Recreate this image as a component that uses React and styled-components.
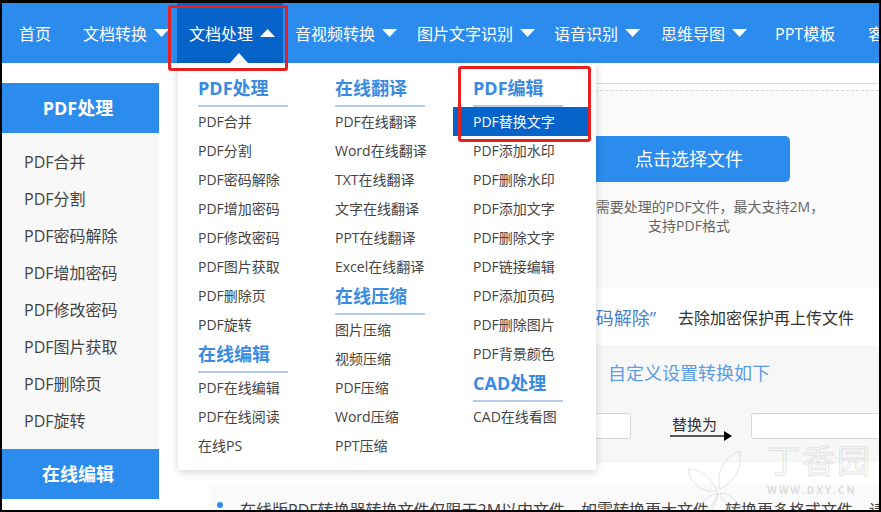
import React from 'react';
import styled, { createGlobalStyle } from 'styled-components';

const GlobalStyle = createGlobalStyle`
  html, body {
    margin: 0;
    padding: 0;
    background: #000;
    font-family: "Open Sans", "Noto Sans CJK SC", sans-serif;
  }
  * { box-sizing: border-box; }
`;

const Frame = styled.div`
  position: relative;
  width: 881px;
  height: 512px;
  overflow: hidden;
  background: #fff;
  border-style: solid;
  border-color: #000;
  border-width: 3px 2px 2px 2px;
`;

const Nav = styled.nav`
  display: flex;
  height: 60px;
  padding-left: 5px;
  background: #2b8ced;
  white-space: nowrap;
`;

const NavItem = styled.div`
  position: relative;
  display: flex;
  flex: none;
  align-items: center;
  height: 60px;
  padding: 0 ${p => p.$right}px 0 12px;
  font-size: 16px;
  color: #fff;
  background: ${p => (p.$active ? '#0563c9' : 'transparent')};
`;

const Caret = styled.i`
  display: block;
  width: 15px;
  height: 8px;
  margin-left: 7px;
  background: #fff;
  clip-path: ${p => (p.$up ? 'polygon(50% 0, 100% 100%, 0 100%)' : 'polygon(0 0, 100% 0, 50% 100%)')};
`;

const Notch = styled.i`
  position: absolute;
  left: 53px;
  bottom: 0;
  width: 0;
  height: 0;
  border-left: 9px solid transparent;
  border-right: 9px solid transparent;
  border-bottom: 10px solid #fff;
`;

const Body = styled.div`
  display: flex;
  height: 447px;
`;

const Sidebar = styled.aside`
  flex: none;
  width: 157px;
  padding-top: 20px;
`;

const SideTitle = styled.div`
  height: 50px;
  line-height: 50px;
  padding-right: 5px;
  text-align: center;
  font-size: 18px;
  font-weight: 700;
  color: #fff;
  background: #2b8ced;
`;

const SideList = styled.ul`
  margin: 0;
  padding: 11px 0 9px 22px;
  list-style: none;
  background: #f8f8f8;
`;

const SideLink = styled.li`
  height: 37px;
  line-height: 37px;
  font-size: 16px;
  color: #444;
`;

const Content = styled.main`
  flex: 1;
  min-width: 0;
  padding: 20px 0 0 50px;
  overflow: hidden;
`;

const UploadBox = styled.section`
  height: 206px;
  padding-top: 6px;
  border-top: 1px solid #dcdcdc;
`;

const DropZone = styled.div`
  display: flex;
  flex-direction: column;
  align-items: center;
  height: 199px;
  padding: 45px 0 0 290px;
  background: #fafafa;
  border-top: 1px dashed #d4d4d4;
`;

const PickButton = styled.div`
  width: 202px;
  height: 46px;
  line-height: 46px;
  text-align: center;
  font-size: 18px;
  color: #fff;
  background: #2b8ced;
  border-radius: 5px;
`;

const Hint = styled.p`
  margin: 15px 0 0;
  line-height: 19px;
  text-align: center;
  text-indent: 14px;
  white-space: nowrap;
  font-size: 14px;
  color: #666;
`;

const Notice = styled.div`
  display: flex;
  justify-content: flex-end;
  align-items: center;
  height: 56px;
  padding-right: 25px;
  font-size: 16px;
  color: #333;
`;

const NoticeLink = styled.span`
  margin-right: 22px;
  font-size: 18px;
  color: #4a7fd0;
`;

const Settings = styled.section`
  height: 118px;
  padding: 14px 0 0 399px;
  background: #f7f7f7;
`;

const SettingsTitle = styled.div`
  height: 30px;
  line-height: 28px;
  font-size: 18px;
  color: #5b9de0;
`;

const ReplaceRow = styled.div`
  display: flex;
  align-items: flex-start;
  margin: 24px 0 0 -129px;
`;

const TextBox = styled.div`
  flex: none;
  width: ${p => p.$w}px;
  height: 26px;
  background: #fff;
  border: 1px solid #d5d5d5;
  border-radius: 3px;
`;

const ReplaceLabel = styled.div`
  flex: none;
  width: 62px;
  margin: 1px 19px 0 39px;
  line-height: 20px;
  text-indent: 2px;
  font-size: 15px;
  color: #333;
`;

const ArrowMark = styled.svg`
  display: block;
  width: 62px;
  height: 10px;
  margin-top: -3px;
`;

const TipBox = styled.section`
  display: flex;
  align-items: flex-start;
  gap: 17px;
  margin-top: 21px;
  padding: 13px 0 0 8px;
  height: 40px;
  background: #fafafa;
  white-space: nowrap;
  font-size: 16px;
  color: #444;
`;

const Bullet = styled.i`
  flex: none;
  width: 6px;
  height: 6px;
  margin-top: 5px;
  border-radius: 50%;
  background: #2b8ced;
`;

const Menu = styled.div`
  position: absolute;
  left: 176px;
  top: 60px;
  display: flex;
  width: 418px;
  height: 407px;
  padding-left: 20px;
  background: #fff;
  box-shadow: 0 2px 8px rgba(0, 0, 0, 0.18);
`;

const MenuColumn = styled.div`
  flex: none;
  width: ${p => p.$w}px;
`;

const MenuTitle = styled.div`
  width: 90px;
  height: 33px;
  line-height: 29px;
  margin-top: ${p => (p.$first ? '11px' : '1px')};
  font-size: 18px;
  font-weight: 700;
  color: #3a8be0;
  border-bottom: 2px solid #b3cde8;
`;

const MenuLink = styled.div`
  height: 29px;
  line-height: 29px;
  font-size: 14px;
  color: #444;
`;

const ActiveMenuLink = styled(MenuLink)`
  margin: 0 6px 0 -20px;
  padding-left: 20px;
  color: #fff;
  background: #0563c9;
`;

const Mark = styled.div`
  position: absolute;
  left: ${p => p.$x}px;
  top: ${p => p.$y}px;
  width: ${p => p.$w}px;
  height: ${p => p.$h}px;
  border: 3px solid #e8201f;
  border-radius: 3px;
  pointer-events: none;
`;

const Watermark = styled.div`
  position: absolute;
  left: 680px;
  top: 446px;
  width: 197px;
  height: 72px;
  pointer-events: none;
`;

const WatermarkName = styled.span`
  position: absolute;
  left: 85px;
  top: -14px;
  font-size: 33px;
  letter-spacing: 2px;
  color: transparent;
  -webkit-text-stroke: 1px rgba(190, 190, 190, 0.4);
`;

const WatermarkUrl = styled.span`
  position: absolute;
  left: 85px;
  top: 34px;
  font-size: 10px;
  font-weight: 700;
  letter-spacing: 2px;
  color: rgba(190, 190, 190, 0.5);
`;

const navItems = [
  { text: '首页', right: 20 },
  { text: '文档转换', right: 8, caret: 'down' },
  { text: '文档处理', right: 8, caret: 'up', active: true },
  { text: '音视频转换', right: 8, caret: 'down' },
  { text: '图片文字识别', right: 7, caret: 'down' },
  { text: '语音识别', right: 9, caret: 'down' },
  { text: '思维导图', right: 16, caret: 'down' },
  { text: 'PPT模板', right: 21 },
  { text: '客户端', right: 20 },
];

const sideItems = ['PDF合并', 'PDF分割', 'PDF密码解除', 'PDF增加密码', 'PDF修改密码', 'PDF图片获取', 'PDF删除页', 'PDF旋转'];

const menuColumns = [
  {
    w: 137,
    groups: [
      { title: 'PDF处理', items: sideItems },
      { title: '在线编辑', items: ['PDF在线编辑', 'PDF在线阅读', '在线PS'] },
    ],
  },
  {
    w: 138,
    groups: [
      { title: '在线翻译', items: ['PDF在线翻译', 'Word在线翻译', 'TXT在线翻译', '文字在线翻译', 'PPT在线翻译', 'Excel在线翻译'] },
      { title: '在线压缩', items: ['图片压缩', '视频压缩', 'PDF压缩', 'Word压缩', 'PPT压缩'] },
    ],
  },
  {
    w: 123,
    groups: [
      { title: 'PDF编辑', items: ['PDF替换文字', 'PDF添加水印', 'PDF删除水印', 'PDF添加文字', 'PDF删除文字', 'PDF链接编辑', 'PDF添加页码', 'PDF删除图片', 'PDF背景颜色'] },
      { title: 'CAD处理', items: ['CAD在线看图'] },
    ],
  },
];

function App() {
  return (
    <Frame>
      <GlobalStyle />
      <Nav>
        {navItems.map(item => (
          <NavItem key={item.text} $right={item.right} $active={item.active}>
            {item.text}
            {item.caret && <Caret $up={item.caret === 'up'} />}
            {item.active && <Notch />}
          </NavItem>
        ))}
      </Nav>
      <Body>
        <Sidebar>
          <SideTitle>PDF处理</SideTitle>
          <SideList>
            {sideItems.map(text => <SideLink key={text}>{text}</SideLink>)}
          </SideList>
          <SideTitle>在线编辑</SideTitle>
        </Sidebar>
        <Content>
          <UploadBox>
            <DropZone>
              <PickButton>点击选择文件</PickButton>
              <Hint>选择需要处理的PDF文件，最大支持2M，<br />支持PDF格式</Hint>
            </DropZone>
          </UploadBox>
          <Notice>
            <NoticeLink>“PDF密码解除”</NoticeLink>
            去除加密保护再上传文件
          </Notice>
          <Settings>
            <SettingsTitle>自定义设置转换如下</SettingsTitle>
            <ReplaceRow>
              <TextBox $w={152} />
              <ReplaceLabel>
                替换为
                <ArrowMark viewBox="0 0 62 10">
                  <path d="M0 5H54" stroke="#222" strokeWidth="1.5" />
                  <path d="M54 0L62 5L54 10Z" fill="#000" />
                </ArrowMark>
              </ReplaceLabel>
              <TextBox $w={200} />
            </ReplaceRow>
          </Settings>
          <TipBox>
            <Bullet />
            在线版PDF转换器转换文件仅限于2M以内文件，如需转换更大文件，转换更多格式文件，请下载客户端
          </TipBox>
        </Content>
      </Body>
      <Menu>
        {menuColumns.map((col, i) => (
          <MenuColumn key={i} $w={col.w}>
            {col.groups.map((group, j) => (
              <React.Fragment key={group.title}>
                <MenuTitle $first={j === 0}>{group.title}</MenuTitle>
                {group.items.map(text => (
                  text === 'PDF替换文字'
                    ? <ActiveMenuLink key={text}>{text}</ActiveMenuLink>
                    : <MenuLink key={text}>{text}</MenuLink>
                ))}
              </React.Fragment>
            ))}
          </MenuColumn>
        ))}
      </Menu>
      <Mark $x={166} $y={2} $w={120} $h={66} />
      <Mark $x={456} $y={63} $w={133} $h={76} />
      <Watermark>
        <svg width="75" height="72" viewBox="0 0 75 72" fill="none" stroke="rgba(190,190,190,0.4)" strokeWidth="1">
          <path d="M38 40C34 22 42 8 58 2C60 18 54 32 38 40Z" />
          <path d="M36 42C28 28 18 20 6 20C8 34 20 44 36 42Z" />
          <path d="M36 44C26 46 18 54 16 62C26 62 34 54 36 44Z" />
          <path d="M38 44C46 44 54 50 58 58C48 60 40 54 38 44Z" />
          <path d="M36 44C34 54 30 62 24 70" />
        </svg>
        <WatermarkName>丁香园</WatermarkName>
        <WatermarkUrl>WWW.DXY.CN</WatermarkUrl>
      </Watermark>
    </Frame>
  );
}

export default App;
